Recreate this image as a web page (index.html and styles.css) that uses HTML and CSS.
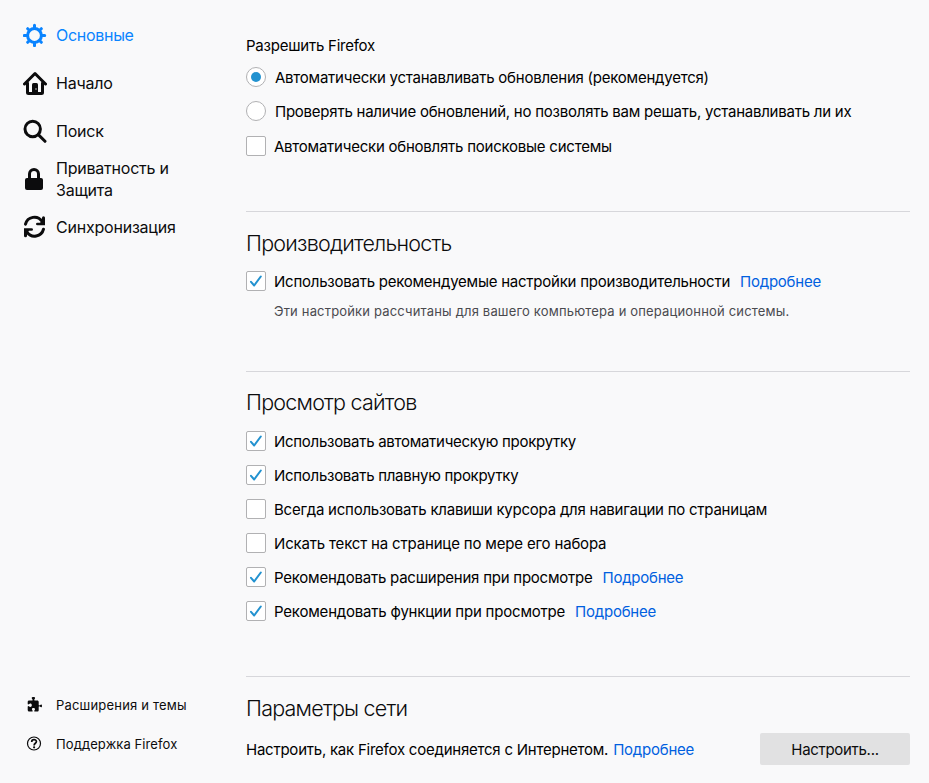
FILE: index.html
```
<!DOCTYPE html>
<html lang="ru">
<head>
<meta charset="utf-8">
<title>Настройки</title>
<link rel="stylesheet" href="styles.css">
</head>
<body>
<div class="page">
  <aside class="sidebar">
    <nav class="categories">
      <a class="category active">
        <svg class="icon" viewBox="0 0 24 24"><g fill="none" stroke="currentColor"><circle cx="11.500" cy="12.500" r="6.900" stroke-width="3"/><path stroke-width="3" stroke-linecap="round" d="M11.500 2.300v3M11.500 19.700v3M1.300 12.500h3M18.700 12.500h3M4.700 5.700l1.600 1.600M16.700 17.700l1.600 1.600M4.700 19.300l1.600-1.600M16.700 7.300l1.600-1.600"/></g></svg>
        <span>Основные</span>
      </a>
      <a class="category">
        <svg class="icon" viewBox="0 0 24 24"><path fill="none" stroke="currentColor" stroke-width="3" stroke-linecap="round" stroke-linejoin="round" d="M1.500 13L12 2.500 22.500 13M4.500 12v9.500q0 1 1 1h13q1 0 1-1V12"/><path fill="currentColor" d="M9 22v-8.500a1.500 1.500 0 0 1 1.500-1.500h3a1.500 1.500 0 0 1 1.500 1.500V22z"/><circle cx="13" cy="18" r=".7" fill="#f9f9fa"/></svg>
        <span>Начало</span>
      </a>
      <a class="category">
        <svg class="icon" viewBox="0 0 24 24"><g fill="none" stroke="currentColor" stroke-width="3"><circle cx="9.700" cy="10" r="7.700"/><path stroke-linecap="round" d="M15.300 15.600l6.700 6.700"/></g></svg>
        <span>Поиск</span>
      </a>
      <a class="category">
        <svg class="icon" viewBox="0 0 24 24"><path fill="none" stroke="currentColor" stroke-width="3" d="M6.500 12V7a4.500 4.500 0 0 1 9 0v5"/><rect x="2" y="11" width="18" height="12" rx="2" fill="currentColor"/></svg>
        <span>Приватность и Защита</span>
      </a>
      <a class="category">
        <svg class="icon" viewBox="0 0 24 24"><g transform="translate(-.5 -.3)"><path fill="none" stroke="currentColor" stroke-width="3" stroke-linecap="round" d="M3 9.500A9.200 9.200 0 0 1 19.500 6.500M21 14.500A9.200 9.200 0 0 1 4.500 17.500"/><path fill="currentColor" d="M21 1.500q1.500 0 1.500 1.500v7.500h-7.500q-1.500 0-1.500-1.200t1.500-1.300h2.500l2-2V3q0-1.500 1.500-1.500zM3 22.500q-1.500 0-1.500-1.500v-7.500H9q1.500 0 1.500 1.200T9 16H6.500l-2 2v3q0 1.500-1.500 1.500z"/></g></svg>
        <span>Синхронизация</span>
      </a>
    </nav>
    <div class="footer-links">
      <a class="footer-link">
        <svg class="small-icon" viewBox="0 0 16 16"><path transform="translate(.7 -.5)" fill="currentColor" d="M14.500 8c-.9 0-1.100 1-1.900 1-.4 0-.6-.3-.6-.8V5.500C12 4.600 11.500 4 10.500 4H8.400c-.5 0-.8-.2-.8-.6 0-.7.8-.9.800-1.800C8.400.700 7.700.500 6.700.500S5 .7 5 1.600c0 .9.900 1.100.9 1.800 0 .4-.3.600-.8.600H2.500C1.500 4 1 4.500 1 5.500v1.700c0 .5.200.8.600.8.700 0 .9-.9 2-.9.900 0 1.500.7 1.500 1.700s-.6 1.700-1.500 1.700c-1.100 0-1.300-.9-2-.9-.4 0-.6.300-.6.800v3.100c0 .9.500 1.500 1.500 1.500h2.700c.5 0 .8-.2.800-.6 0-.6-.8-.8-.8-1.700 0-.8.600-1.300 1.500-1.300s1.600.5 1.600 1.300c0 .9-.8 1.100-.8 1.700 0 .4.300.6.800.6h2.200c1 0 1.500-.5 1.500-1.500v-2.900c0-.5.200-.8.600-.8.800 0 1 1 1.900 1 .5 0 .8-.6.800-1.400S15 8 14.500 8z"/></svg>
        <span>Расширения и темы</span>
      </a>
      <a class="footer-link">
        <svg class="small-icon" viewBox="0 0 16 16"><circle cx="8" cy="7.500" r="6.500" fill="none" stroke="currentColor" stroke-width="1.200"/><path fill="none" stroke="currentColor" stroke-width="1.700" d="M5.700 5.900C5.700 2.900 10.400 3 10.400 5.600 10.400 7.300 8.100 7.200 8.100 9.400"/><circle cx="8.100" cy="11.300" r="1.100" fill="currentColor"/></svg>
        <span class="support">Поддержка Firefox</span>
      </a>
    </div>
  </aside>
  <main class="content">
    <section class="group updates">
      <p class="row intro"><span>Разрешить Firefox</span></p>
      <label class="row"><i class="radio on"></i><span>Автоматически устанавливать обновления (рекомендуется)</span></label>
      <label class="row"><i class="radio"></i><span>Проверять наличие обновлений, но позволять вам решать, устанавливать ли их</span></label>
      <label class="row engines"><i class="box"></i><span>Автоматически обновлять поисковые системы</span></label>
    </section>
    <section class="group performance">
      <h2>Производительность</h2>
      <label class="row"><i class="box"><svg viewBox="0 0 18 18"><path d="M4 9.800l3.200 3.700L13.800 4.500"/></svg></i><span>Использовать рекомендуемые настройки производительности</span><a class="more">Подробнее</a></label>
      <p class="hint">Эти настройки рассчитаны для вашего компьютера и операционной системы.</p>
    </section>
    <section class="group browsing">
      <h2>Просмотр сайтов</h2>
      <label class="row"><i class="box"><svg viewBox="0 0 18 18"><path d="M4 9.800l3.200 3.700L13.800 4.500"/></svg></i><span class="tight">Использовать автоматическую прокрутку</span></label>
      <label class="row"><i class="box"><svg viewBox="0 0 18 18"><path d="M4 9.800l3.200 3.700L13.800 4.500"/></svg></i><span class="tight">Использовать плавную прокрутку</span></label>
      <label class="row"><i class="box"></i><span>Всегда использовать клавиши курсора для навигации по страницам</span></label>
      <label class="row"><i class="box"></i><span class="loose">Искать текст на странице по мере его набора</span></label>
      <label class="row"><i class="box"><svg viewBox="0 0 18 18"><path d="M4 9.800l3.200 3.700L13.800 4.500"/></svg></i><span>Рекомендовать расширения при просмотре</span><a class="more">Подробнее</a></label>
      <label class="row"><i class="box"><svg viewBox="0 0 18 18"><path d="M4 9.800l3.200 3.700L13.800 4.500"/></svg></i><span class="features">Рекомендовать функции при просмотре</span><a class="more">Подробнее</a></label>
    </section>
    <section class="group network">
      <h2>Параметры сети</h2>
      <div class="row"><span>Настроить, как Firefox соединяется с Интернетом.</span><a class="more near">Подробнее</a><button class="button">Настроить...</button></div>
    </section>
  </main>
</div>
</body>
</html>
```
FILE: styles.css
```
* { box-sizing: border-box; }
body {
  margin: 0;
  background: #f9f9fa;
  color: #0c0c0d;
  font: 15px/22px Inter, "Liberation Sans", sans-serif;
}
h2, p { margin: 0; }
.page { display: flex; height: 783px; overflow: hidden; }
.sidebar {
  width: 246px;
  flex: none;
  display: flex;
  flex-direction: column;
  justify-content: space-between;
  padding: 11px 0 20px 23px;
}
.category { display: flex; align-items: center; height: 48px; gap: 9px; font-size: 16px; letter-spacing: -.22px; }
.category span { width: 140px; }
.category.active { color: #0a84ff; letter-spacing: -.3px; }
.icon { width: 24px; height: 24px; flex: none; }
.footer-link { display: flex; align-items: center; height: 39px; gap: 14px; padding-left: 3px; font-size: 13px; letter-spacing: .19px; }
.support { letter-spacing: .1px; }
.small-icon { width: 16px; height: 16px; flex: none; overflow: visible; }
.content { width: 664px; padding-top: 28px; white-space: nowrap; }
.group { border-bottom: 1px solid #d7d7db; }
.row { display: flex; align-items: center; height: 34px; color: #000; letter-spacing: -.235px; }
.row > span, .row > .more { padding-top: 2px; }
.row.intro { height: 32px; padding-top: 1px; }
.row.engines { height: 35px; padding-top: 1px; }
.tight { letter-spacing: -.28px; }
.loose { letter-spacing: -.17px; }
.features { letter-spacing: -.2px; }
.updates { height: 184px; }
.performance { height: 160px; }
.browsing { height: 305px; }
.network { border: 0; }
h2 { height: 52px; padding-top: 14px; font-size: 21.5px; line-height: 34px; font-weight: 350; letter-spacing: -.78px; }
.browsing h2 { padding-top: 13px; }
.network h2 { height: 55px; }
.box, .radio { width: 20px; height: 20px; flex: none; margin-right: 8px; background: #fff; border: 1px solid #b1b1b3; border-radius: 2px; }
.radio { border-radius: 50%; margin-right: 9px; display: flex; align-items: center; justify-content: center; }
.radio.on::after { content: ""; width: 10px; height: 10px; border-radius: 50%; background: #2292d0; }
.box svg { display: block; width: 18px; height: 18px; fill: none; stroke: #2292d0; stroke-width: 2; stroke-linecap: round; stroke-linejoin: round; }
.more { color: #0060df; margin-left: 10px; }
.more.near { margin-left: 5px; }
.hint { padding: 2px 0 0 28px; font-size: 13px; color: #4a4a4f; letter-spacing: .17px; }
.button { width: 150px; height: 32px; margin-left: auto; padding-top: 2px; border: 0; border-radius: 2px; background: #e1e1e2; color: #0c0c0d; font: inherit; letter-spacing: -.3px; }
```
